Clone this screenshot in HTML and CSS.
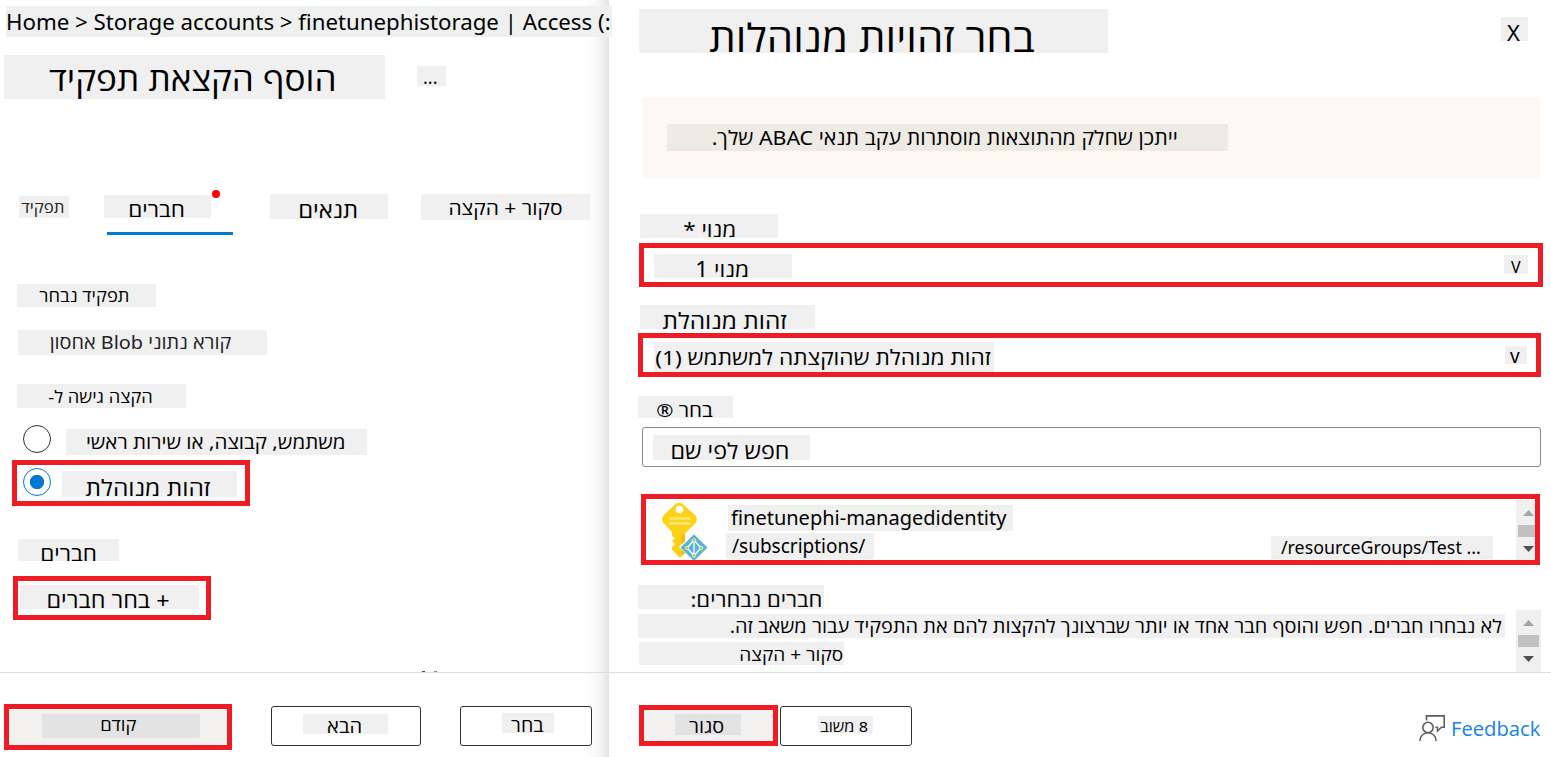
FILE: index.html
```html
<!DOCTYPE html>
<html lang="he">
<head>
<meta charset="utf-8">
<title>הוסף הקצאת תפקיד</title>
<link rel="stylesheet" href="styles.css">
</head>
<body>
<div class="app">
  <section class="page">
    <div class="page-body">
      <nav class="chip crumb"><span>Home &gt; Storage accounts &gt; finetunephistorage | Access (:</span></nav>
      <div class="heading">
        <h1 class="chip title"><span dir="rtl">הוסף הקצאת תפקיד</span></h1>
        <div class="chip more"><span>...</span></div>
      </div>
      <div class="tabs">
        <div class="chip tab-role"><span dir="rtl">תפקיד</span></div>
        <div class="tab-active">
          <div class="chip tab-members"><span dir="rtl">חברים</span></div>
          <i class="dot"></i>
        </div>
        <div class="chip tab-conditions"><span dir="rtl">תנאים</span></div>
        <div class="chip tab-review"><span dir="rtl">סקור + הקצה</span></div>
      </div>
      <div class="chip role-label"><span dir="rtl">תפקיד נבחר</span></div>
      <div class="chip role-value"><span dir="rtl">קורא נתוני Blob אחסון</span></div>
      <div class="chip assign-label"><span dir="rtl">הקצה גישה ל-</span></div>
      <div class="option">
        <i class="radio"></i>
        <div class="chip opt-user"><span dir="rtl">משתמש, קבוצה, או שירות ראשי</span></div>
      </div>
      <div class="option-marked">
        <i class="radio radio-on"></i>
        <div class="chip opt-managed"><span dir="rtl">זהות מנוהלת</span></div>
      </div>
      <div class="chip members-label"><span dir="rtl">חברים</span></div>
      <div class="select-members">
        <div class="chip select-text"><span dir="rtl">+ בחר חברים</span></div>
      </div>
      <i class="cut-text"></i>
    </div>
    <footer class="footer">
      <div class="btn-prev"><div class="chip prev-text"><span dir="rtl">קודם</span></div></div>
      <div class="btn btn-next"><div class="chip next-text"><span dir="rtl">הבא</span></div></div>
      <div class="btn btn-choose"><div class="chip choose-text"><span dir="rtl">בחר</span></div></div>
    </footer>
  </section>

  <section class="panel">
    <div class="panel-body">
      <div class="panel-head">
        <h2 class="chip panel-title"><span dir="rtl">בחר זהויות מנוהלות</span></h2>
        <div class="chip close-x"><span>X</span></div>
      </div>
      <div class="notice"><div class="chip notice-text"><span dir="rtl">ייתכן שחלק מהתוצאות מוסתרות עקב תנאי ABAC שלך.</span></div></div>
      <div class="chip sub-label"><span dir="rtl">מנוי *</span></div>
      <div class="dropdown dd-sub">
        <div class="chip sub-value"><span dir="rtl">מנוי 1</span></div>
        <div class="chip chev-a"><span>V</span></div>
      </div>
      <div class="chip mi-label"><span dir="rtl">זהות מנוהלת</span></div>
      <div class="dropdown dd-mi">
        <div class="chip mi-value"><span dir="rtl">זהות מנוהלת שהוקצתה למשתמש (1)</span></div>
        <div class="chip chev-b"><span>v</span></div>
      </div>
      <div class="chip pick-label"><span dir="rtl">בחר ®</span></div>
      <div class="search"><div class="chip search-text"><span dir="rtl">חפש לפי שם</span></div></div>
      <div class="result">
        <svg class="key" width="48" height="59" viewBox="0 0 48 59">
          <path d="M15 2.500Q18 .8 21 2.500L34 14Q37.500 18 34.500 22L24 32.500V52L19 57L11 49V46L14 43L11 40L14 37L11 35V31L2.500 22Q-.5 18 3 14Z" fill="#fcd116"/>
          <path d="M20.500 33H24V52L20.500 55Z" fill="#f9b90f"/>
          <circle cx="18.500" cy="8.500" r="3.800" fill="#fff"/>
          <path d="M9 17.500H28.500M9 22.500H28.500" stroke="#fee67b" stroke-width="2.500" stroke-linecap="round"/>
          <path d="M33 32L48 46L33 60L18 46Z" fill="#fff"/>
          <path d="M32 34.300Q33 33.300 34 34.300L46 46Q46.500 46.500 46 47L34 59H32L20 47Q19.500 46.500 20 46Z" fill="#59b4d9"/>
          <path d="M33 39L26 47L33 54.500L40 47ZM33 39V54" fill="none" stroke="#fff" stroke-width="1.300"/>
          <g fill="#b8d432" stroke="#fff" stroke-width=".6"><circle cx="33" cy="39.500" r="1.800"/><circle cx="26" cy="47" r="1.800"/><circle cx="40" cy="47" r="1.800"/><circle cx="33" cy="54.500" r="1.800"/></g>
        </svg>
        <div class="result-text">
          <div class="chip res-name"><span>finetunephi-managedidentity</span></div>
          <div class="res-row">
            <div class="chip res-subs"><span>/subscriptions/</span></div>
            <div class="chip res-group"><span>/resourceGroups/Test ...</span></div>
          </div>
        </div>
        <svg class="scroll-a" width="19" height="60" viewBox="0 0 19 60">
          <path d="M0 0H19V60H0Z" fill="#f0f0f0"/><path d="M7 16L12.500 10L18 16Z" fill="#a3a3a3"/><path d="M2 25H19V37H2Z" fill="#c1c1c1"/><path d="M7 46L12.500 52L18 46Z" fill="#505050"/>
        </svg>
      </div>
      <div class="selected">
        <div class="selected-text">
          <div class="chip sel-label"><span dir="rtl">חברים נבחרים:</span></div>
          <div class="chip sel-none"><span dir="rtl">לא נבחרו חברים. חפש והוסף חבר אחד או יותר שברצונך להקצות להם את התפקיד עבור משאב זה.</span></div>
          <div class="chip sel-review"><span dir="rtl">סקור + הקצה</span></div>
        </div>
        <svg class="scroll-b" width="25" height="62" viewBox="0 0 25 62">
          <path d="M0 0H25V62H0Z" fill="#f0f0f0"/><path d="M7 16L12.500 10L18 16Z" fill="#a3a3a3"/><path d="M2 25H23V37H2Z" fill="#c1c1c1"/><path d="M7 46L12.500 52L18 46Z" fill="#505050"/>
        </svg>
      </div>
    </div>
    <footer class="footer panel-footer">
      <div class="btn-close"><div class="chip close-text"><span dir="rtl">סגור</span></div></div>
      <div class="btn btn-fb"><div class="chip fb-text"><span dir="rtl">8 משוב</span></div></div>
      <a class="feedback">
        <svg width="28" height="28" viewBox="0 0 28 28" fill="none" stroke="#605e5c" stroke-width="1.600">
          <path d="M8.500 6.500V1.900H26.200V13.200H23.500L19.500 17V13.200H17.500"/>
          <circle cx="10" cy="13.500" r="5.200"/>
          <path d="M1.800 27C2 22 5.500 18.700 10 18.700S18 22 18.200 27"/>
        </svg>
        <span>Feedback</span>
      </a>
    </footer>
  </section>
</div>
</body>
</html>
```
FILE: styles.css
```css
* { box-sizing: border-box; }
body { margin: 0; background: #fff; color: #000; font-family: "Noto Sans", "Open Sans", sans-serif; }
.app { display: flex; width: 1551px; height: 757px; overflow: hidden; }
.page { width: 609px; height: 757px; display: flex; flex-direction: column; background: linear-gradient(to right, transparent 584px, #fafafa 594px, #f3f3f3 602px, #e2e2e2 609px); }
.page-body, .panel-body { position: relative; height: 672px; display: flex; flex-direction: column; align-items: flex-start; }
.panel { width: 942px; height: 757px; }
.footer { display: flex; align-items: flex-start; height: 85px; border-top: 1px solid #dcdcdc; }

.chip { flex: none; display: flex; background: #f0f0f0; white-space: nowrap; font-weight: 400; margin: 0; }
.chip span { flex: none; }
/* Hebrew labels are set slightly wide, squeezed towards the baseline */
.chip span[dir="rtl"] { transform: scale(.993, .91); transform-origin: 50% calc(50% + .388em); }

.crumb { position: relative; z-index: 2; width: 606px; height: 31px; margin: 6px 0 0 6px; font-size: 22.25px; line-height: 31px; background: #eff1f1; }
.heading { display: flex; align-items: flex-start; margin: 18px 0 0 4px; }
.title { width: 381px; height: 44px; padding-left: 44px; font-size: 35.4px; line-height: 44px; }
.more { width: 29px; height: 20px; margin: 11px 0 0 32px; padding-left: 6px; font-size: 18px; line-height: 23px; }
.tabs { display: flex; align-items: flex-start; height: 41px; margin: 95px 0 0 19px; }
.tab-role { width: 50px; height: 22px; margin-top: 2px; padding-left: 2px; font-size: 17px; line-height: 21px; color: #222; }
.tab-active { position: relative; width: 129px; height: 41px; margin: 0 37px 0 35px; padding-top: 1px; background: linear-gradient(#0078d4, #0078d4) 3px 38px / 126px 3px no-repeat; }
.tab-members { width: 107px; height: 23px; padding-left: 24px; font-size: 22.7px; line-height: 28px; }
.dot { position: absolute; left: 108px; top: -4px; width: 8px; height: 8px; border-radius: 50%; background: #f00; }
.tab-conditions { width: 118px; height: 25px; padding-left: 28px; font-size: 24px; line-height: 30px; }
.tab-review { width: 169px; height: 26px; margin-left: 33px; padding-left: 27px; font-size: 21.1px; line-height: 26px; }
.role-label { width: 139px; height: 23px; margin: 49px 0 0 17px; padding-left: 22px; font-size: 18.5px; line-height: 22px; }
.role-value { width: 249px; height: 25px; margin: 23px 0 0 18px; padding-left: 31px; font-size: 20px; line-height: 24px; color: #222; }
.assign-label { width: 169px; height: 24px; margin: 29px 0 0 17px; padding-left: 31px; font-size: 18.4px; line-height: 24px; }
.option { display: flex; margin: 17px 0 0 23px; height: 28px; }
.radio { flex: none; width: 28px; height: 28px; border: 1px solid #323130; border-radius: 50%; }
.radio-on { border-color: #0078d4; background: radial-gradient(circle, #0078d4 6.8px, transparent 7.5px); }
.opt-user { width: 301px; height: 26px; margin: 4px 0 0 15px; padding-left: 19px; font-size: 20.7px; line-height: 25px; }
.option-marked { display: flex; width: 238px; height: 46px; margin: 7px 0 0 12px; padding: 3px 0 0 6px; border: 5px solid #ee1c24; }
.opt-managed { width: 175px; height: 26px; margin: 3px 0 0 11px; padding-left: 23px; font-size: 24.7px; line-height: 31px; }
.members-label { width: 101px; height: 22px; margin: 33px 0 0 18px; padding-left: 22px; font-size: 22.7px; line-height: 27px; }
.select-members { width: 198px; height: 44px; margin: 15px 0 0 13px; padding: 4px 0 0 2px; border: 5px solid #ee1c24; }
.select-text { width: 179px; height: 24px; padding-left: 26px; font-size: 23.6px; line-height: 29px; }
.cut-text { position: absolute; left: 422px; top: 671px; width: 15px; height: 1px; background: linear-gradient(to right, #444 3px, transparent 3px 12px, #888 12px); }

.btn { display: flex; flex: none; height: 40px; border: 1px solid #323130; border-radius: 3px; background: #fff; }
.btn-prev { width: 228px; height: 46px; margin: 31px 0 0 4px; padding: 5px 0 0 33px; border: 5px solid #ee1c24; background: #f3f2f1; }
.prev-text { width: 158px; height: 24px; padding-left: 58px; font-size: 18.5px; line-height: 20px; background: #e3e3e3; }
.btn-next { width: 150px; margin: 33px 0 0 39px; padding: 7px 0 0 31px; }
.next-text { width: 85px; height: 20px; padding-left: 24px; font-size: 20.3px; line-height: 23px; }
.btn-choose { width: 132px; margin: 33px 0 0 39px; padding: 6px 0 0 41px; }
.choose-text { width: 52px; height: 20px; padding-left: 9px; font-size: 19.8px; line-height: 24px; }

.panel-head { display: flex; align-items: flex-start; margin: 9px 0 0 30px; height: 44px; }
.panel-title { width: 469px; height: 44px; padding-left: 69px; font-size: 42.3px; line-height: 53px; }
.close-x { width: 27px; height: 24px; margin: 8px 0 0 393px; padding-left: 6px; font-size: 22px; line-height: 31px; }
.notice { width: 898px; height: 81px; margin: 44px 0 0 33px; padding: 27px 0 0 25px; border-radius: 3px; background: #fff7f1; }
.notice-text { width: 561px; height: 27px; padding-left: 43px; font-size: 21.5px; line-height: 26px; background: #eeeae4; }
.sub-label { width: 138px; height: 24px; margin: 36px 0 0 31px; padding-left: 43px; font-size: 22.7px; line-height: 29px; }
.dropdown { display: flex; justify-content: space-between; height: 44px; border: 5px solid #ee1c24; }
.dd-sub { width: 904px; margin: 5px 0 0 30px; padding: 6px 10px 0 10px; }
.sub-value { width: 138px; height: 24px; padding-left: 41px; font-size: 22.9px; line-height: 29px; }
.chev-a { width: 24px; height: 19px; margin-top: 1px; padding-left: 7px; font-size: 16px; line-height: 24px; }
.mi-label { width: 175px; height: 24px; margin: 18px 0 0 31px; padding-left: 22px; font-size: 24.6px; line-height: 29px; }
.dd-mi { width: 903px; margin: 4px 0 0 29px; padding: 4px 9px 0 11px; }
.mi-value { width: 340px; height: 30px; font-size: 22.8px; line-height: 30px; }
.chev-b { width: 22px; height: 18px; margin-top: 4px; padding-left: 5px; font-size: 19px; line-height: 20px; }
.pick-label { width: 95px; height: 22px; margin: 19px 0 0 29px; padding-left: 18px; font-size: 20.8px; line-height: 26px; }
.search { width: 899px; height: 40px; margin: 9px 0 0 33px; padding: 7px 0 0 10px; border: 1px solid #8a8886; border-radius: 3px; }
.search-text { width: 157px; height: 25px; padding-left: 17px; font-size: 23.5px; line-height: 30px; }
.result { display: flex; width: 899px; height: 71px; margin: 27px 0 0 32px; border: 5px solid #ee1c24; }
.key { flex: none; margin: 2px 0 0 15px; }
.result-text { width: 767px; margin: 6px 0 0 17px; }
.res-name { width: 285px; height: 26px; margin-left: 2px; padding-left: 3px; font-size: 20px; line-height: 26px; }
.res-row { display: flex; align-items: flex-start; justify-content: space-between; margin-top: 2px; }
.res-subs { width: 148px; height: 26px; padding-left: 6px; font-size: 19px; line-height: 27px; }
.res-group { width: 222px; height: 23px; margin-top: 3px; padding-left: 10px; font-size: 17.8px; line-height: 23px; }
.scroll-a { flex: none; margin: 1px 0 0 23px; }
.selected { display: flex; margin: 20px 0 0 29px; }
.selected-text { width: 878px; }
.sel-label { width: 186px; height: 24px; padding-left: 52px; font-size: 22.2px; line-height: 28px; }
.sel-none { width: 867px; height: 24px; margin-top: 5px; padding-left: 89px; font-size: 20.1px; line-height: 23px; }
.sel-review { width: 205px; height: 23px; margin: 4px 0 0 1px; padding-left: 100px; font-size: 19.2px; line-height: 23px; }
.scroll-b { flex: none; margin-top: 25px; }

.btn-close { width: 139px; height: 41px; margin: 32px 0 0 30px; padding: 4px 0 0 31px; border: 5px solid #ee1c24; background: #f3f2f1; }
.close-text { width: 66px; height: 21px; padding-left: 14px; font-size: 20.1px; line-height: 24px; background: #e3e3e3; }
.btn-fb { width: 132px; margin: 33px 0 0 2px; padding: 9px 0 0 37px; }
.fb-text { width: 55px; height: 17px; padding-left: 2px; font-size: 16.4px; line-height: 20px; }
.feedback { display: flex; margin: 41px 0 0 506px; gap: 5px; color: #1683dc; font: 20.2px/28px "Open Sans", sans-serif; }
```
